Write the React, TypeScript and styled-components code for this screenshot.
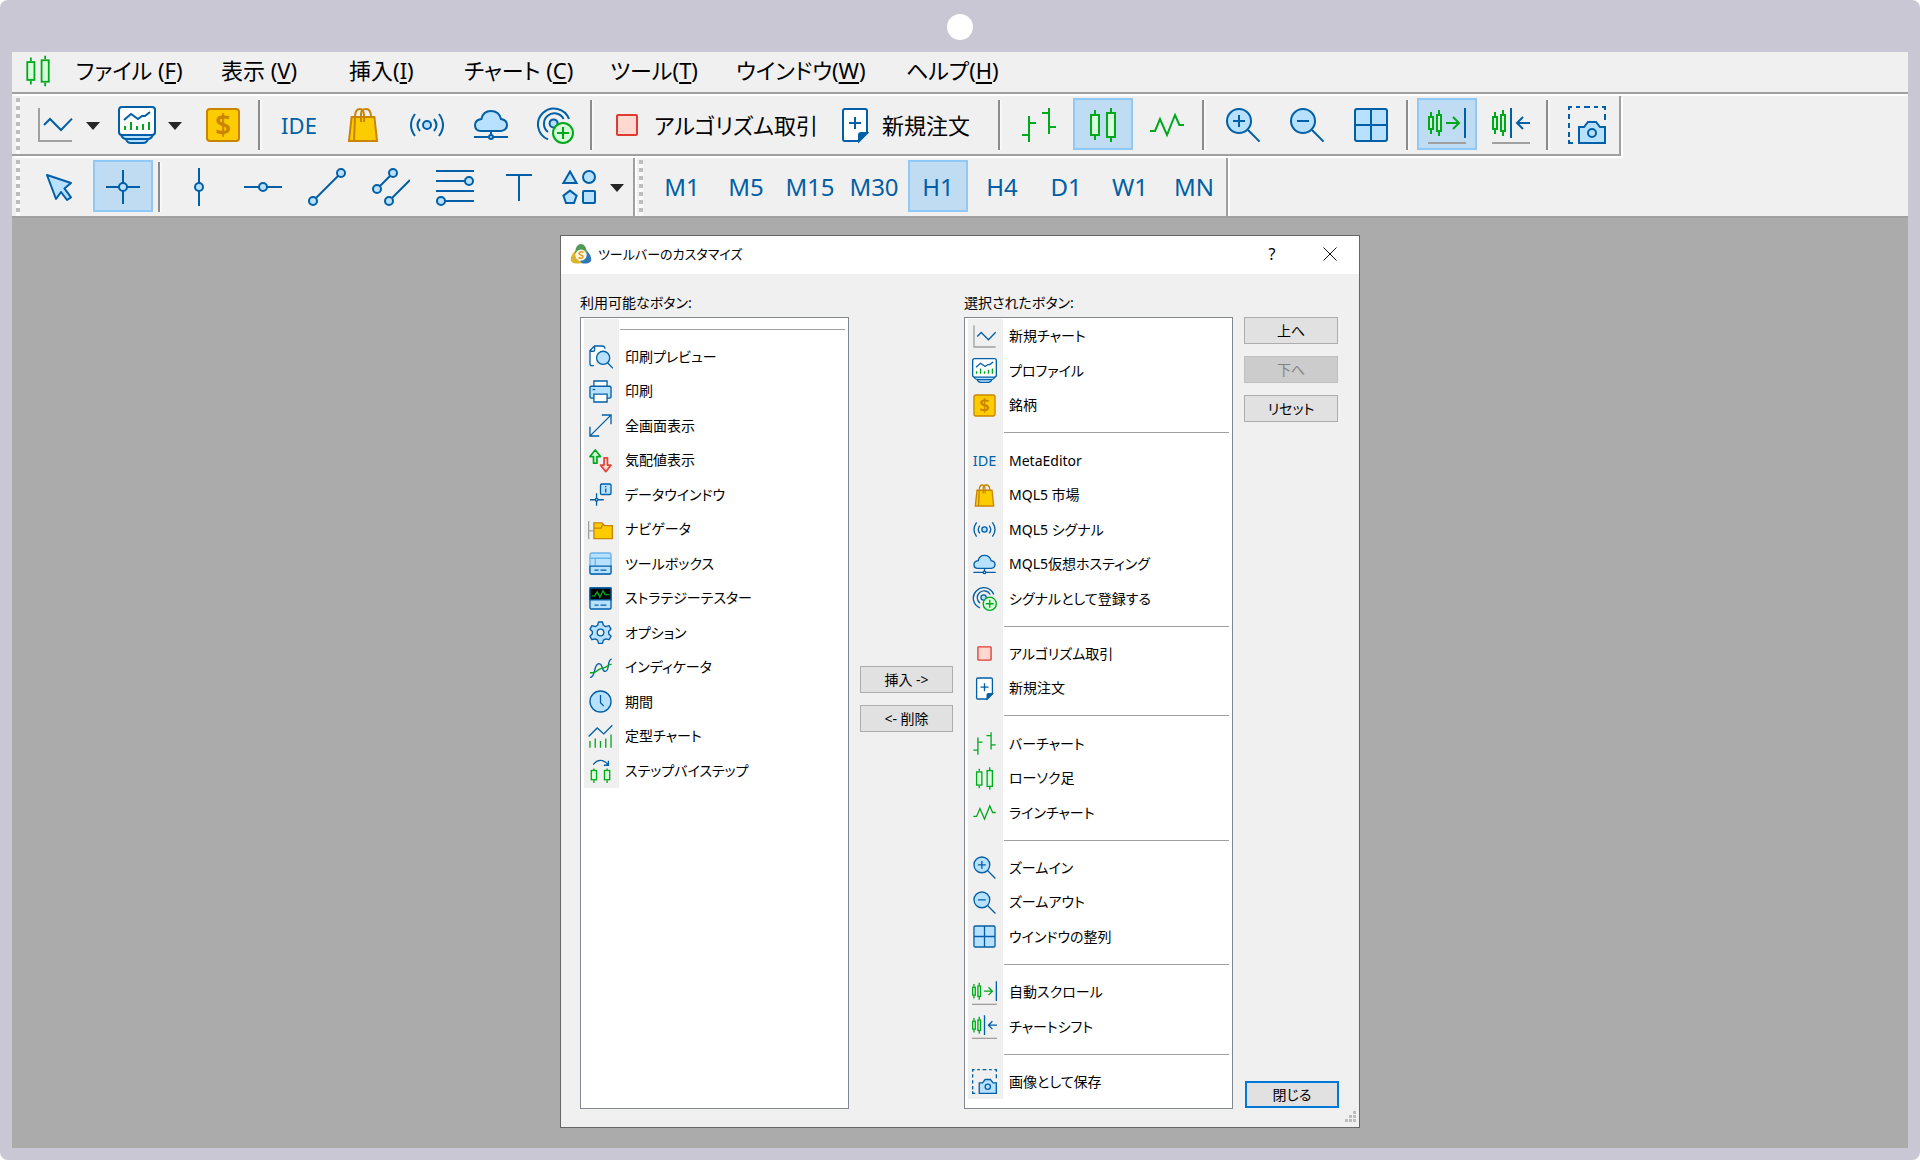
import React from 'react';
import styled, { createGlobalStyle, css } from 'styled-components';

const BLUE = '#005fa6';
const SKY = '#b8e1ff';
const GREEN = '#00a81c';
const MINT = '#d6ffd9';
const GOLD = '#c98500';
const YELLOW = '#fccc00';
const GRAY = '#a0a0a0';
const JP = '"Noto Sans", "Noto Sans CJK JP", sans-serif';

const GlobalStyle = createGlobalStyle`
  * { box-sizing: border-box; }
  body { margin: 0; background: #fff; font-family: ${JP}; color: #000; }
  button { font-family: inherit; color: inherit; }
  ul { margin: 0; padding: 0; list-style: none; }
`;

/* ---------- icons, all on a 19-unit grid ---------- */

const Svg = styled.svg<{ $size: number }>`
  display: block;
  flex: none;
  width: ${(p) => p.$size}px;
  height: ${(p) => p.$size}px;
  fill: none;
  stroke: ${BLUE};
  stroke-width: 1;
`;

const IconText = styled.text`
  font-family: "Noto Sans", sans-serif;
  stroke: none;
  text-anchor: middle;
`;

const miniCandles = (
  <g stroke={GREEN} fill={MINT}>
    <path d="M1.5 3v2M1.5 12v2M5.5 2v2M5.5 13v2" />
    <rect x="0.5" y="5.5" width="2" height="6" />
    <rect x="4.5" y="4.5" width="2" height="8" />
  </g>
);

const icons = {
  newChart: (
    <>
      <path stroke={GRAY} d="M1.5 1v16.5H18" />
      <path d="M4 9.5 7 6.5l5.5 5.5L18 6.3" />
    </>
  ),
  profile: (
    <>
      <path fill={SKY} d="M4 16.5q.5 2 2.500 2h6q2 0 2.500-2" />
      <path fill={SKY} d="M1.500 14.500q1 2 2.500 2h11q1.500 0 2.500-2" />
      <rect x="0.5" y="0.5" width="18" height="14" rx="1.500" fill="#fff" />
      <path d="M3 7 6.500 4 10 6.500l2-1.500h1.500L16 3" />
      <path stroke={GREEN} d="M3.500 12v-2M6.500 12V8M9.500 12v-2M12.500 12V9M15.500 12V8" />
    </>
  ),
  symbol: (
    <>
      <rect x="1.5" y="1.5" width="16" height="16" rx="1.5" fill={YELLOW} stroke={GOLD} />
      <IconText x="9.5" y="14.500" fontSize="14" fontWeight="600" fill={GOLD}>$</IconText>
    </>
  ),
  ide: <IconText x="9.5" y="14" fontSize="11" fill={BLUE}>IDE</IconText>,
  bag: (
    <g stroke={GOLD}>
      <path fill={YELLOW} d="M3.800 5.500h11.400l1.300 12h-14z" />
      <path d="M5.500 5.500 5 17.500" />
      <path d="M5.500 5.500q0-4 2.500-4t2 6.500M8.500 8V4q0-2.500 2.500-2.500t2.500 4" />
    </g>
  ),
  signal: (
    <>
      <circle cx="9.5" cy="9.500" r="2" fill={SKY} />
      <path d="M6 6.500q-2.500 3 0 6M13 6.500q2.500 3 0 6M3.500 4q-4 5.500 0 11M15.500 4q4 5.500 0 11" />
    </>
  ),
  cloud: (
    <>
      <path fill={SKY} d="M4.500 12.500q-3 0-3-3 0-2.500 3.200-3Q5.500 2.500 9.500 2.500t5 4q3 .5 3 3t-3 3z" />
      <path d="M9.500 12.500v2M1 15.500h17" />
      <circle cx="9.500" cy="15.500" r="1" fill={SKY} />
    </>
  ),
  register: (
    <>
      <path d="M16.500 6.500A8 8 0 1 0 6 16.700M13.800 6.500A5.200 5.200 0 1 0 6 13" />
      <circle cx="8.800" cy="8.700" r="2" fill={SKY} />
      <circle cx="13.500" cy="13.500" r="5" stroke={GREEN} fill={MINT} />
      <path stroke={GREEN} d="M10.500 13.500h6M13.500 10.500v6" />
    </>
  ),
  algo: <rect x="4.5" y="4.5" width="10" height="10" rx="0.5" fill="#ffd9cf" stroke="#e03a32" />,
  order: (
    <>
      <path fill="#fff" d="M4.500 1.500h10q1 0 1 1v11l-4 4h-7q-1 0-1-1v-14q0-1 1-1z" />
      <path fill={BLUE} d="M15.500 13.500l-4 4v-3q0-1 1-1z" />
      <path d="M6.500 8.500h6M9.500 5.500v6" />
    </>
  ),
  bars: <path stroke={GREEN} d="M1 14.500h3.500M4.500 5v13M4.500 8.500H8M11 3.500h3.500M14.500 1v13M14.500 10.500H18" />,
  candles: (
    <g stroke={GREEN} fill={MINT}>
      <path d="M5.500 2v2M5.500 15v2M13.500 1v2M13.500 16v2" />
      <rect x="3.500" y="4.500" width="4" height="10" />
      <rect x="11.500" y="3.500" width="4" height="12" />
    </g>
  ),
  line: <path stroke={GREEN} d="M1 12.500h2.500l2.500-6 3.500 8 4-10 2.200 5H18" />,
  zoomIn: (
    <>
      <circle cx="7.500" cy="7.500" r="6" fill={SKY} />
      <path d="M4.500 7.500h6M7.500 4.500v6M12 12l5.800 5.800" />
    </>
  ),
  zoomOut: (
    <>
      <circle cx="7.500" cy="7.500" r="6" fill={SKY} />
      <path d="M4.500 7.500h6M12 12l5.800 5.800" />
    </>
  ),
  tile: (
    <>
      <rect x="1.500" y="1.500" width="16" height="16" rx="1" fill={SKY} />
      <path d="M9.500 1.500v16M1.500 9.500h16" />
    </>
  ),
  autoScroll: (
    <>
      {miniCandles}
      <path stroke={GREEN} d="M9 8.500h6.500M12.500 5.500l3 3-3 3" />
      <path d="M18.500 1v15" />
      <path stroke={GRAY} d="M0 18.500h19" />
    </>
  ),
  chartShift: (
    <>
      {miniCandles}
      <path d="M9.500 1v15M12.500 8.500H19M15.500 5.500l-3 3 3 3" />
      <path stroke={GRAY} d="M0 18.500h19" />
    </>
  ),
  camera: (
    <>
      <path d="M.5 2V.5H2M4 .5h2M8 .5h3M13 .5h2M17 .5h1.500V2M18.500 4v3M.5 4v2.500M.5 8.500v2.500M.5 13v2.500M.5 17v1.500H2.500" />
      <path fill={SKY} d="M5.500 18.500v-8H8l2-2.500h4l2 2.500h2.500v8z" />
      <circle cx="12" cy="13.500" r="2" />
    </>
  ),
  pointer: <path fill={SKY} strokeLinejoin="round" d="M3.500 3.500l12 4-3.300 2.700 3.300 4.500-2 1.300-3-4-2.500 3.500z" />,
  crosshair: (
    <>
      <path d="M9.500 1v17M1 9.500h17" />
      <circle cx="9.500" cy="9.500" r="2" fill={SKY} />
    </>
  ),
  vline: (
    <>
      <path d="M9.500 0v19" />
      <circle cx="9.500" cy="9.500" r="2" fill={SKY} />
    </>
  ),
  hline: (
    <>
      <path d="M0 9.500h19" />
      <circle cx="9.500" cy="9.500" r="2" fill={SKY} />
    </>
  ),
  trend: (
    <>
      <path d="M2.500 16.500l14-14" />
      <circle cx="2.500" cy="16.500" r="2" fill={SKY} />
      <circle cx="16.500" cy="2.500" r="2" fill={SKY} />
    </>
  ),
  channel: (
    <>
      <path d="M2.500 10.500l8-8M8.500 16.500 19 6" />
      <circle cx="2.500" cy="10.500" r="2" fill={SKY} />
      <circle cx="10.500" cy="2.500" r="2" fill={SKY} />
      <circle cx="8.500" cy="16.500" r="2" fill={SKY} />
    </>
  ),
  fibo: (
    <>
      <path d="M0 1.500h19M0 6.500h15M0 11.500h19M4 16.500h15" />
      <circle cx="16.500" cy="6.500" r="2" fill={SKY} />
      <circle cx="2.500" cy="16.500" r="2" fill={SKY} />
    </>
  ),
  text: <path d="M3 3.500h13M9.500 3.500v13" />,
  shapes: (
    <g fill={SKY}>
      <path d="M5 1.800 8.300 7.500H1.700z" />
      <circle cx="14.500" cy="4.500" r="3" />
      <path d="M5 11.300l3.300 2.500-1.300 3.700H3l-1.300-3.700z" />
      <rect x="11.500" y="11.500" width="6" height="6" rx="0.5" />
    </g>
  ),
  preview: (
    <>
      <path fill="#fff" d="M3.500 16.500H2q-1 0-1-1V5l3.500-3.500H12q1 0 1 1V5" stroke="none" />
      <path d="M4.500 16.500H3q-1.500 0-1.500-1.500V5L5 1.500h6q1.500 0 2 2M1.500 5.500H4q1 0 1-1v-3" />
      <circle cx="11.500" cy="10.500" r="5" fill={SKY} />
      <path d="M15 14.500l4 4" />
    </>
  ),
  print: (
    <>
      <path fill="#fff" d="M4.500 5.500v-4h10v4" />
      <rect x="1.500" y="5.500" width="16" height="9" rx="1" fill={SKY} />
      <path d="M3.500 8h2" />
      <path fill="#fff" d="M4.500 11.500h10v6h-10z" />
    </>
  ),
  fullscreen: <path d="M2 17 17 2M10.500 1.500h7v7M1.500 10.500v7h7" />,
  market: (
    <g strokeWidth="1.3" strokeLinejoin="round">
      <path stroke={GREEN} fill={MINT} d="M4.200 11.500v-5H1.500L5.500 1.500l4 5H6.800v5z" />
      <path stroke="#e0443c" fill="#ffd9cf" d="M12.200 7.500v5.500H9.500l4 5 4-5h-2.700V7.500z" />
    </g>
  ),
  dataWindow: (
    <>
      <path d="M6.500 8.500V18M1.500 13.500H12" />
      <circle cx="6.500" cy="13.500" r="1" fill={SKY} />
      <rect x="9.500" y="1.500" width="8" height="8" rx="1" fill={SKY} />
      <path d="M13.500 5v3M13.500 3v1" />
    </>
  ),
  navigator: (
    <>
      <path stroke={GRAY} d="M.5 3v14M.5 10.500H4" />
      <path fill={YELLOW} stroke={GOLD} d="M4.500 4.500h6l2 2h6v10h-14z" />
      <path stroke={GOLD} d="M4.500 8.500H9q1.500 0 1.500-1.500t1.500-.5" />
    </>
  ),
  toolbox: (
    <>
      <rect x="1.500" y="1.500" width="16" height="16" rx="1.500" fill={SKY} stroke="#69b3e7" />
      <path stroke="#69b3e7" d="M1.500 5.500h16M5.500 5.500v6" />
      <path fill={SKY} d="M1.500 11.500h16v5q0 1-1 1h-14q-1 0-1-1z" />
      <path d="M5 14.500h3M9.500 14.500H14" />
    </>
  ),
  tester: (
    <>
      <rect x="1.500" y="1.500" width="16" height="16" rx="1" fill={SKY} />
      <path fill="#000" d="M1.500 1.500h16v9h-16z" />
      <path stroke={GREEN} d="M3 7.500h2l2-3 2 4 2.500-5 1.500 3h3" />
      <path d="M5 14.500h3M9.500 14.500H14" />
    </>
  ),
  options: (
    <>
      <path
        fill={SKY}
        strokeLinejoin="round"
        d="M8 1.500h3l.7 2.500 1.800 1 2.500-.7 1.500 2.600-1.800 1.800v1.800l1.800 1.900-1.500 2.600-2.500-.7-1.800 1-.7 2.500H8l-.7-2.500-1.800-1-2.500.7-1.500-2.600 1.800-1.900V8.700L1.500 6.900 3 4.300l2.500.7 1.800-1z"
      />
      <circle cx="9.500" cy="9.500" r="2.500" fill="#f0f0f0" />
    </>
  ),
  indicators: (
    <>
      <path d="M1.500 17q2.500 0 3.500-5t3-5.500q2 0 2.800 3t2.200 3q2 0 2.500-4.500T18 3" />
      <path stroke={GREEN} d="M1.500 13.500h2q2 0 3.500-1.500t4-2 3.500-1.500T18 7" />
    </>
  ),
  period: (
    <>
      <circle cx="9.500" cy="9.500" r="8" fill={SKY} />
      <path d="M9.500 4.500v6l2.500 2.500" />
    </>
  ),
  template: (
    <>
      <path d="M.5 9.500 7 3l5 4.500L18.500 1" />
      <path stroke={GREEN} d="M1.500 18v-5M5.500 18v-7M9.500 18v-5M13.500 18v-7M17.500 18V8" />
    </>
  ),
  step: (
    <>
      <path d="M4 5q3-4 7-3 3 1 4 3M15.500 2v3.500H12" />
      <g stroke={GREEN} fill={MINT}>
        <path d="M4.500 8v2M4.500 17v2M14.500 8v2M14.500 17v2" />
        <rect x="2.500" y="9.500" width="4" height="7" />
        <rect x="12.500" y="9.500" width="4" height="7" />
      </g>
    </>
  ),
};

type IconName = keyof typeof icons;

const Icon = ({ name, size = 38 }: { name: IconName; size?: number }) => (
  <Svg $size={size} viewBox="0 0 19 19" aria-hidden="true">
    {icons[name]}
  </Svg>
);

/* ---------- frame ---------- */

const Frame = styled.div`
  display: flex;
  flex-direction: column;
  min-height: 100vh;
  padding: 0 12px 12px;
  border-radius: 8px;
  background: #c8c7d3;
`;

const FrameTop = styled.div`
  display: flex;
  align-items: center;
  justify-content: center;
  height: 52px;
  padding-top: 2px;
`;

const Lens = styled.span`
  width: 26px;
  height: 26px;
  border-radius: 50%;
  background: #fff;
`;

const Chrome = styled.header`
  background: #f0f0f0;
  border-bottom: 2px solid ${GRAY};
`;

const MenuBar = styled.nav`
  display: flex;
  align-items: center;
  height: 44px;
  padding-left: 8px;
  border-bottom: 2px solid #fff;
  box-shadow: inset 0 -2px 0 ${GRAY};
`;

const MenuItem = styled.button<{ $width: number }>`
  flex: none;
  width: ${(p) => p.$width}px;
  height: 40px;
  margin-bottom: 4px;
  padding: 0 0 2px;
  border: 0;
  background: none;
  font-size: 22px;
  line-height: 36px;
  text-align: left;
  white-space: nowrap;
  font-feature-settings: "palt";

  u {
    text-underline-offset: 3px;
  }
`;

const MenuMark = styled.span`
  display: flex;
  width: 56px;
  padding: 0 0 4px 1px;
`;

/* ---------- toolbars ---------- */

const Row = styled.div`
  display: flex;
`;

const Toolbar = styled.div<{ $underlined?: boolean }>`
  display: flex;
  align-items: flex-start;
  height: ${(p) => (p.$underlined ? 60 : 58)}px;
  padding-left: 4px;
  border-right: 2px solid ${GRAY};
  box-shadow: 2px 0 0 #fff;
  ${(p) =>
    p.$underlined &&
    css`
      margin-bottom: 2px;
      border-bottom: 2px solid ${GRAY};
      box-shadow: 2px 2px 0 #fff;
    `}

  &::before {
    content: "";
    width: 4px;
    height: 56px;
    margin: 2px 7px 0 0;
    background: repeating-linear-gradient(#bdbdbd 0 4px, #fafafa 4px 8px);
  }
`;

const ToolButton = styled.button<{ $active?: boolean }>`
  display: flex;
  flex: none;
  align-items: center;
  justify-content: center;
  width: 60px;
  height: 52px;
  margin: 2px 2px 0;
  padding: 2px 0 0;
  border: 2px solid ${(p) => (p.$active ? '#90c8f6' : 'transparent')};
  background: ${(p) => (p.$active ? '#c0dcf3' : 'transparent')};
  color: ${BLUE};
  font-size: 24px;
  line-height: 32px;
`;

const WideButton = styled(ToolButton)<{ $width: number }>`
  justify-content: flex-start;
  gap: 8px;
  width: ${(p) => p.$width}px;
  margin: 2px 0 0;
  padding-left: 7px;
  color: #000;
  font-size: 22px;
  white-space: nowrap;
  font-feature-settings: "palt";
`;

const SplitGroup = styled.div`
  display: flex;
  flex: none;
  padding-right: 6px;
`;

const SplitButton = styled(ToolButton)`
  width: 56px;
  margin: 2px 0 0;
`;

const CaretButton = styled.button`
  display: flex;
  flex: none;
  align-items: center;
  justify-content: center;
  width: 20px;
  height: 58px;
  padding: 2px 0 0;
  border: 0;
  background: none;

  &::after {
    content: "";
    border: 7px solid transparent;
    border-top: 8px solid #262626;
    border-bottom: 0;
  }
`;

const Divider = styled.span`
  flex: none;
  width: 2px;
  height: 50px;
  margin: 4px 7px 0 3px;
  background: #8c8c8c;
  box-shadow: 2px 0 0 #f8f8f8;
`;

/* ---------- workspace and dialog ---------- */

const Workspace = styled.main`
  display: flex;
  flex: 1;
  align-items: flex-start;
  justify-content: center;
  padding: 17px 0;
  background: #ababab;
`;

const Dialog = styled.section`
  width: 800px;
  border: 1px solid #666;
  background: #f0f0f0;
  font-feature-settings: "palt";
`;

const TitleBar = styled.header`
  display: flex;
  align-items: center;
  height: 38px;
  padding: 0 0 2px 9px;
  background: #fff;
`;

const Title = styled.h1`
  flex: 1;
  margin: 0 0 0 6px;
  font-size: 13px;
  font-weight: 400;
  line-height: 20px;
`;

const TitleButton = styled.button`
  display: flex;
  align-items: center;
  justify-content: center;
  width: 58px;
  height: 36px;
  padding: 0;
  border: 0;
  background: none;
  font-size: 16px;
`;

const Body = styled.div`
  display: grid;
  grid-template-columns: 269px 93px 269px 94px;
  column-gap: 11px;
  padding: 18px 20px 5px 19px;
`;

const Panel = styled.div`
  display: flex;
  flex-direction: column;
  margin-bottom: 13px;
`;

const PanelLabel = styled.h2`
  margin: 0 0 3px;
  font-size: 14px;
  font-weight: 400;
  line-height: 22px;
`;

const ListBox = styled.div`
  flex: 1;
  padding: 1px 3px 9px;
  border: 1px solid #828790;
  background: #fff;
`;

const List = styled.ul<{ $height: number }>`
  display: flex;
  flex-direction: column;
  height: ${(p) => p.$height}px;
  background: linear-gradient(#f0f0f0, #f0f0f0) left / 35px 100% no-repeat;
`;

const Item = styled.li`
  display: flex;
  flex: 5;
  align-items: center;
  padding-left: 4px;
  font-size: 14px;
  line-height: 20px;
  white-space: nowrap;
`;

const ItemText = styled.span`
  margin-left: 12px;
`;

const Separator = styled.li`
  display: flex;
  flex: 3;
  align-items: center;
  margin-left: 36px;

  &::after {
    content: "";
    flex: 1;
    height: 1px;
    background: ${GRAY};
  }
`;

const ButtonColumn = styled.div<{ $side?: boolean }>`
  display: flex;
  flex-direction: column;
  gap: 12px;
  justify-content: ${(p) => (p.$side ? 'flex-start' : 'center')};
  padding: ${(p) => (p.$side ? '25px 0 0' : '0 0 16px')};
`;

const PushButton = styled.button<{ $primary?: boolean }>`
  height: 27px;
  padding: 0;
  border: ${(p) => (p.$primary ? '2px solid #0078d7' : '1px solid #adadad')};
  background: #e1e1e1;
  font-size: 14px;
  line-height: 20px;
  font-feature-settings: "palt";

  &:disabled {
    border-color: #bfbfbf;
    background: #ccc;
    color: #838383;
  }
`;

const CloseArea = styled.div`
  display: flex;
  flex-direction: column;
  margin: auto -1px 0 1px;
`;

const GripSvg = styled.svg`
  align-self: flex-end;
  width: 11px;
  height: 11px;
  margin: 3px -17px 0 0;
  fill: #bdbdbd;
`;

const LogoSvg = styled.svg`
  width: 22px;
  height: 22px;
`;

const CrossSvg = styled.svg`
  width: 14px;
  height: 14px;
  stroke: #111;
`;

const Logo = () => (
  <LogoSvg viewBox="0 0 22 22" aria-hidden="true">
    <path fill="#4f9a57" d="M11 1c3 0 5 3 5.500 6l1 4-6.500-2-6.500 2 1-4C6 4 8 1 11 1z" />
    <path fill="#2f78b5" d="M17 8c3 3 5 7 4 10-2 3-6 3-10 2l-1-2 6-3z" />
    <path fill="#d8b52c" d="M5 8c-3 3-5 7-4 10 2 3 6 3 11 2l-6-5z" />
    <circle cx="11" cy="12" r="5.500" fill="#fff6dc" />
    <path fill="none" stroke="#e39a2d" strokeWidth="1.500" d="M13.500 9.500q-2.500-1.500-4 0t1.500 2.500 1.500 2.500-4 0" />
  </LogoSvg>
);

/* ---------- content ---------- */

const menus: [string, string, number][] = [
  ['ファイル ', 'F', 145],
  ['表示 ', 'V', 128],
  ['挿入', 'I', 115],
  ['チャート ', 'C', 146],
  ['ツール', 'T', 126],
  ['ウインドウ', 'W', 170],
  ['ヘルプ', 'H', 110],
];

type Entry = [IconName, string] | null;

const available: Entry[] = [
  null,
  ['preview', '印刷プレビュー'],
  ['print', '印刷'],
  ['fullscreen', '全画面表示'],
  ['market', '気配値表示'],
  ['dataWindow', 'データウインドウ'],
  ['navigator', 'ナビゲータ'],
  ['toolbox', 'ツールボックス'],
  ['tester', 'ストラテジーテスター'],
  ['options', 'オプション'],
  ['indicators', 'インディケータ'],
  ['period', '期間'],
  ['template', '定型チャート'],
  ['step', 'ステップバイステップ'],
];

const selected: Entry[] = [
  ['newChart', '新規チャート'],
  ['profile', 'プロファイル'],
  ['symbol', '銘柄'],
  null,
  ['ide', 'MetaEditor'],
  ['bag', 'MQL5 市場'],
  ['signal', 'MQL5 シグナル'],
  ['cloud', 'MQL5仮想ホスティング'],
  ['register', 'シグナルとして登録する'],
  null,
  ['algo', 'アルゴリズム取引'],
  ['order', '新規注文'],
  null,
  ['bars', 'バーチャート'],
  ['candles', 'ローソク足'],
  ['line', 'ラインチャート'],
  null,
  ['zoomIn', 'ズームイン'],
  ['zoomOut', 'ズームアウト'],
  ['tile', 'ウインドウの整列'],
  null,
  ['autoScroll', '自動スクロール'],
  ['chartShift', 'チャートシフト'],
  null,
  ['camera', '画像として保存'],
];

const periods = ['M1', 'M5', 'M15', 'M30', 'H1', 'H4', 'D1', 'W1', 'MN'];

const Tool = ({ name, active }: { name: IconName; active?: boolean }) => (
  <ToolButton type="button" $active={active} aria-label={name}>
    <Icon name={name} />
  </ToolButton>
);

const SplitTool = ({ name }: { name: IconName }) => (
  <SplitGroup>
    <SplitButton type="button" aria-label={name}>
      <Icon name={name} />
    </SplitButton>
    <CaretButton type="button" aria-label={`${name} menu`} />
  </SplitGroup>
);

const ButtonList = ({ label, entries, height }: { label: string; entries: Entry[]; height: number }) => (
  <Panel>
    <PanelLabel>{label}</PanelLabel>
    <ListBox>
      <List $height={height} aria-label={label}>
        {entries.map((entry, i) =>
          entry ? (
            <Item key={i}>
              <Icon name={entry[0]} size={25} />
              <ItemText>{entry[1]}</ItemText>
            </Item>
          ) : (
            <Separator key={i} role="separator" />
          ),
        )}
      </List>
    </ListBox>
  </Panel>
);

export default function App() {
  return (
    <>
      <GlobalStyle />
      <Frame>
        <FrameTop>
          <Lens />
        </FrameTop>
        <Chrome>
          <MenuBar>
            <MenuMark>
              <Icon name="candles" size={34} />
            </MenuMark>
            {menus.map(([text, key, width]) => (
              <MenuItem key={key} type="button" $width={width}>
                {text}(<u>{key}</u>)
              </MenuItem>
            ))}
          </MenuBar>
          <Row>
            <Toolbar $underlined>
              <SplitTool name="newChart" />
              <SplitTool name="profile" />
              <Tool name="symbol" />
              <Divider />
              <Tool name="ide" />
              <Tool name="bag" />
              <Tool name="signal" />
              <Tool name="cloud" />
              <Tool name="register" />
              <Divider />
              <WideButton type="button" $width={228}>
                <Icon name="algo" />
                アルゴリズム取引
              </WideButton>
              <WideButton type="button" $width={168}>
                <Icon name="order" />
                新規注文
              </WideButton>
              <Divider />
              <Tool name="bars" />
              <Tool name="candles" active />
              <Tool name="line" />
              <Divider />
              <Tool name="zoomIn" />
              <Tool name="zoomOut" />
              <Tool name="tile" />
              <Divider />
              <Tool name="autoScroll" active />
              <Tool name="chartShift" />
              <Divider />
              <Tool name="camera" />
            </Toolbar>
          </Row>
          <Row>
            <Toolbar>
              <Tool name="pointer" />
              <Tool name="crosshair" active />
              <Divider />
              <Tool name="vline" />
              <Tool name="hline" />
              <Tool name="trend" />
              <Tool name="channel" />
              <Tool name="fibo" />
              <Tool name="text" />
              <SplitTool name="shapes" />
            </Toolbar>
            <Toolbar>
              {periods.map((p) => (
                <ToolButton key={p} type="button" $active={p === 'H1'}>
                  {p}
                </ToolButton>
              ))}
            </Toolbar>
          </Row>
        </Chrome>
        <Workspace>
          <Dialog role="dialog" aria-labelledby="dialog-title">
            <TitleBar>
              <Logo />
              <Title id="dialog-title">ツールバーのカスタマイズ</Title>
              <TitleButton type="button">?</TitleButton>
              <TitleButton type="button" aria-label="close">
                <CrossSvg viewBox="0 0 14 14">
                  <path d="M.5.5l13 13M13.500.5l-13 13" />
                </CrossSvg>
              </TitleButton>
            </TitleBar>
            <Body>
              <ButtonList label="利用可能なボタン:" entries={available} height={469} />
              <ButtonColumn>
                <PushButton type="button">挿入 -&gt;</PushButton>
                <PushButton type="button">&lt;- 削除</PushButton>
              </ButtonColumn>
              <ButtonList label="選択されたボタン:" entries={selected} height={780} />
              <ButtonColumn $side>
                <PushButton type="button">上へ</PushButton>
                <PushButton type="button" disabled>
                  下へ
                </PushButton>
                <PushButton type="button">リセット</PushButton>
                <CloseArea>
                  <PushButton type="button" $primary>
                    閉じる
                  </PushButton>
                  <GripSvg viewBox="0 0 11 11" aria-hidden="true">
                    <path d="M8 0h3v3H8zM8 4h3v3H8zM4 4h3v3H4zM8 8h3v3H8zM4 8h3v3H4zM0 8h3v3H0z" />
                  </GripSvg>
                </CloseArea>
              </ButtonColumn>
            </Body>
          </Dialog>
        </Workspace>
      </Frame>
    </>
  );
}
